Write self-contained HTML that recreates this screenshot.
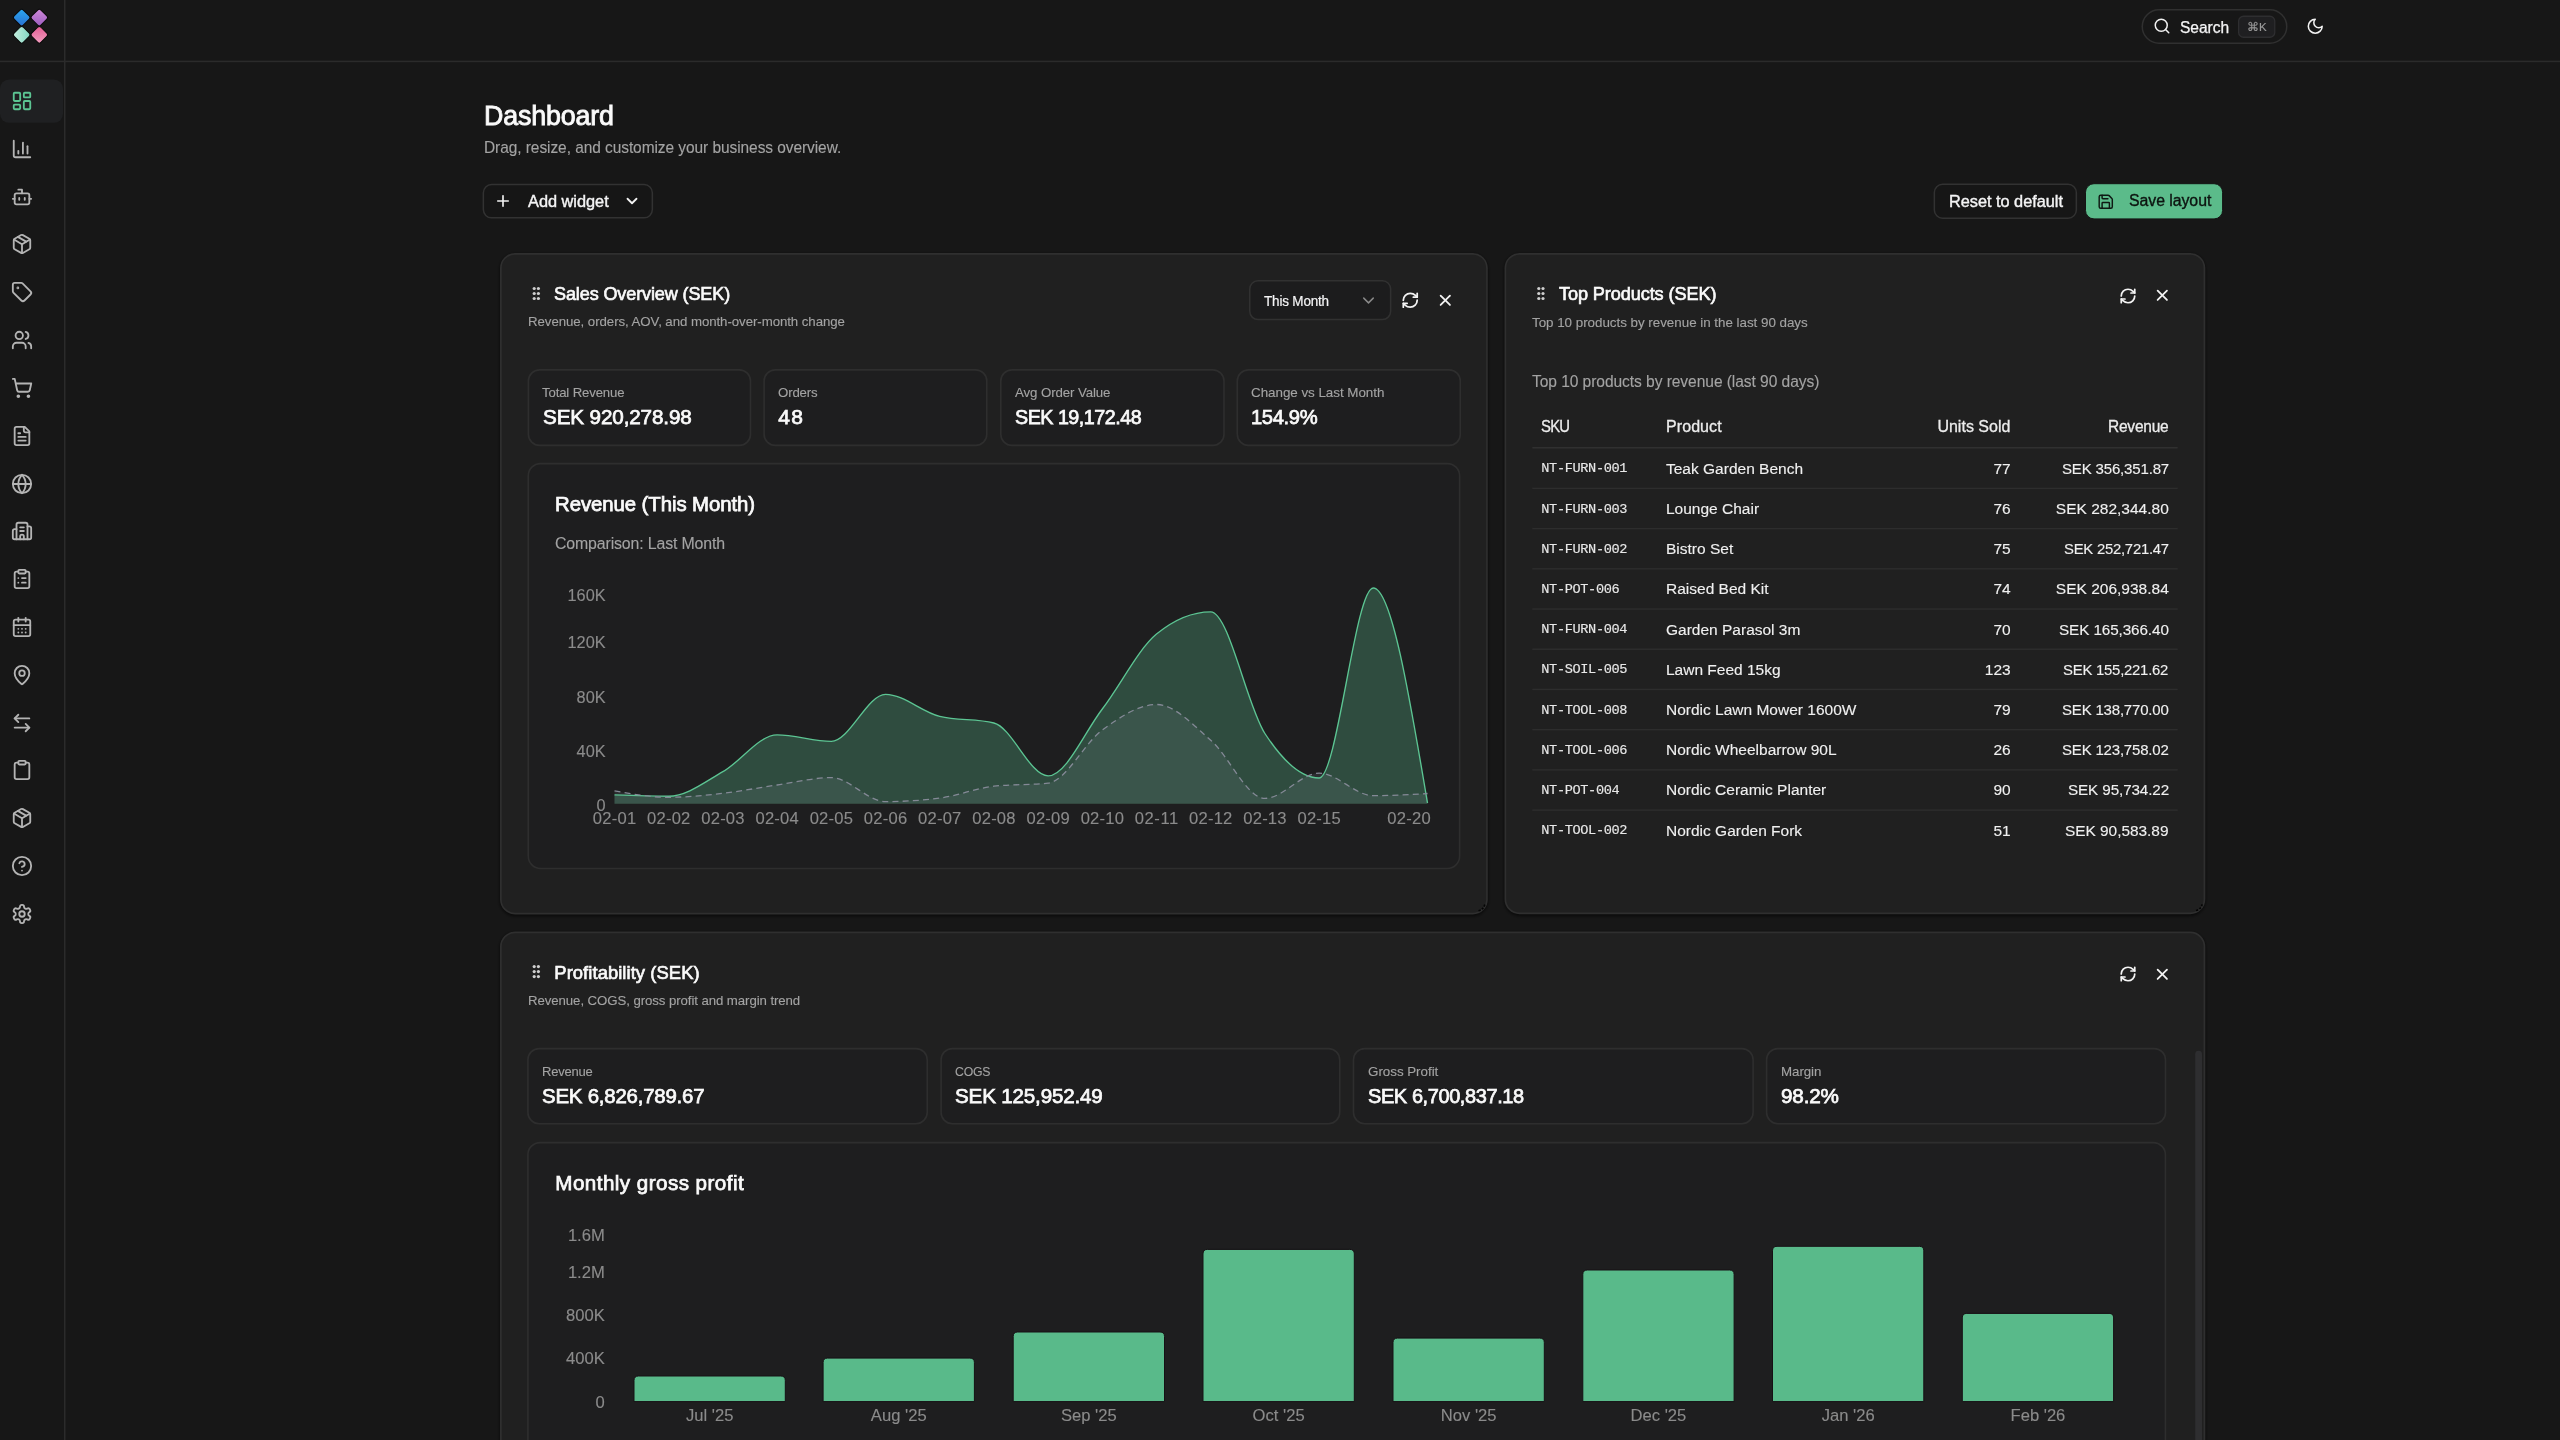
<!DOCTYPE html>
<html><head><meta charset="utf-8"><title>Dashboard</title>
<style>
html,body{margin:0;padding:0;}
body{width:2560px;height:1440px;overflow:hidden;position:relative;background:#171717;font-family:"Liberation Sans", sans-serif;}
.t{position:absolute;white-space:nowrap;}
.bx{position:absolute;box-sizing:border-box;}
.ic{position:absolute;overflow:visible;}
.layer{position:absolute;left:0;top:0;width:2560px;height:1440px;will-change:transform;}
</style></head><body>
<svg class="ic" style="left:0;top:0;width:2560px;height:1440px" viewBox="0 0 2560 1440"><defs><filter id="blur" x="-10%" y="-10%" width="120%" height="120%"><feGaussianBlur stdDeviation="1.5"/></filter></defs><rect x="0.00" y="60.70" width="2560.00" height="1.50" rx="0" fill="#2b2b2b"/>
<rect x="64.00" y="0.00" width="1.50" height="1440.00" rx="0" fill="#2b2b2b"/>
<rect x="0.00" y="79.50" width="63.00" height="43.30" rx="9" fill="#1f2022"/>
<rect x="2142.25" y="9.75" width="144.50" height="33.50" rx="16.75" fill="#171717" stroke="#303030" stroke-width="1.5"/>
<rect x="2238.65" y="16.25" width="36.10" height="21.00" rx="4.85" fill="#1f1f21" stroke="#2e2e30" stroke-width="1.3"/>
<rect x="483.35" y="184.55" width="169.00" height="33.30" rx="8.25" fill="#161616" stroke="#323232" stroke-width="1.5"/>
<rect x="1934.35" y="184.35" width="142.00" height="33.90" rx="8.25" fill="#161616" stroke="#323232" stroke-width="1.5"/>
<rect x="2085.50" y="183.70" width="137.10" height="35.20" rx="8.50" fill="#5bbb8a" stroke="#141414" stroke-width="1.0"/>
<rect x="499.50" y="253.50" width="988.80" height="662.90" rx="16" fill="#0a0a0a" fill-opacity="0.55" filter="url(#blur)"/><rect x="500.85" y="253.85" width="986.10" height="659.70" rx="14.15" fill="#202020" stroke="#2f2f2f" stroke-width="1.7"/>
<rect x="1504.00" y="253.50" width="701.80" height="662.70" rx="16" fill="#0a0a0a" fill-opacity="0.55" filter="url(#blur)"/><rect x="1505.35" y="253.85" width="699.10" height="659.50" rx="14.15" fill="#202020" stroke="#2f2f2f" stroke-width="1.7"/>
<rect x="499.50" y="932.10" width="1706.30" height="549.90" rx="16" fill="#0a0a0a" fill-opacity="0.55" filter="url(#blur)"/><rect x="500.85" y="932.45" width="1703.60" height="546.70" rx="14.15" fill="#202020" stroke="#2f2f2f" stroke-width="1.7"/>
<rect x="1249.75" y="280.75" width="140.90" height="38.80" rx="8.25" fill="#1c1c1d" stroke="#313131" stroke-width="1.5"/>
<rect x="528.40" y="369.90" width="222.10" height="75.50" rx="11.20" fill="#1e1e1f" stroke="#2e2e2e" stroke-width="1.6"/>
<rect x="764.10" y="369.90" width="222.70" height="75.50" rx="11.20" fill="#1e1e1f" stroke="#2e2e2e" stroke-width="1.6"/>
<rect x="1000.80" y="369.90" width="223.20" height="75.50" rx="11.20" fill="#1e1e1f" stroke="#2e2e2e" stroke-width="1.6"/>
<rect x="1237.30" y="369.90" width="223.00" height="75.50" rx="11.20" fill="#1e1e1f" stroke="#2e2e2e" stroke-width="1.6"/>
<rect x="528.30" y="463.60" width="931.30" height="404.90" rx="12.20" fill="#1e1e1f" stroke="#2e2e2e" stroke-width="1.6"/>
<rect x="1532.30" y="447.00" width="645.40" height="1.50" rx="0" fill="#303030"/>
<rect x="1532.30" y="487.65" width="645.40" height="1.40" rx="0" fill="#2d2d2d"/>
<rect x="1532.30" y="527.87" width="645.40" height="1.40" rx="0" fill="#2d2d2d"/>
<rect x="1532.30" y="568.09" width="645.40" height="1.40" rx="0" fill="#2d2d2d"/>
<rect x="1532.30" y="608.31" width="645.40" height="1.40" rx="0" fill="#2d2d2d"/>
<rect x="1532.30" y="648.53" width="645.40" height="1.40" rx="0" fill="#2d2d2d"/>
<rect x="1532.30" y="688.75" width="645.40" height="1.40" rx="0" fill="#2d2d2d"/>
<rect x="1532.30" y="728.97" width="645.40" height="1.40" rx="0" fill="#2d2d2d"/>
<rect x="1532.30" y="769.19" width="645.40" height="1.40" rx="0" fill="#2d2d2d"/>
<rect x="1532.30" y="809.41" width="645.40" height="1.40" rx="0" fill="#2d2d2d"/>
<rect x="527.90" y="1048.60" width="399.30" height="75.10" rx="11.20" fill="#1e1e1f" stroke="#2e2e2e" stroke-width="1.6"/>
<rect x="941.10" y="1048.60" width="398.60" height="75.10" rx="11.20" fill="#1e1e1f" stroke="#2e2e2e" stroke-width="1.6"/>
<rect x="1353.50" y="1048.60" width="399.60" height="75.10" rx="11.20" fill="#1e1e1f" stroke="#2e2e2e" stroke-width="1.6"/>
<rect x="1766.60" y="1048.60" width="398.90" height="75.10" rx="11.20" fill="#1e1e1f" stroke="#2e2e2e" stroke-width="1.6"/>
<rect x="527.90" y="1142.60" width="1637.50" height="336.60" rx="12.20" fill="#1e1e1f" stroke="#2e2e2e" stroke-width="1.6"/>
<rect x="2195.20" y="1050.80" width="6.80" height="409.20" rx="3.4" fill="#2e2e30"/>
</svg>
<svg class="ic" style="left:0;top:0;width:2560px;height:1440px" viewBox="0 0 2560 1440"><circle cx="534.20" cy="288.50" r="1.6" fill="#cfcfcf"/><circle cx="534.20" cy="293.50" r="1.6" fill="#cfcfcf"/><circle cx="534.20" cy="298.50" r="1.6" fill="#cfcfcf"/><circle cx="538.40" cy="288.50" r="1.6" fill="#cfcfcf"/><circle cx="538.40" cy="293.50" r="1.6" fill="#cfcfcf"/><circle cx="538.40" cy="298.50" r="1.6" fill="#cfcfcf"/><circle cx="1538.80" cy="288.50" r="1.6" fill="#cfcfcf"/><circle cx="1538.80" cy="293.50" r="1.6" fill="#cfcfcf"/><circle cx="1538.80" cy="298.50" r="1.6" fill="#cfcfcf"/><circle cx="1543.00" cy="288.50" r="1.6" fill="#cfcfcf"/><circle cx="1543.00" cy="293.50" r="1.6" fill="#cfcfcf"/><circle cx="1543.00" cy="298.50" r="1.6" fill="#cfcfcf"/><circle cx="534.20" cy="966.60" r="1.6" fill="#cfcfcf"/><circle cx="534.20" cy="971.60" r="1.6" fill="#cfcfcf"/><circle cx="534.20" cy="976.60" r="1.6" fill="#cfcfcf"/><circle cx="538.40" cy="966.60" r="1.6" fill="#cfcfcf"/><circle cx="538.40" cy="971.60" r="1.6" fill="#cfcfcf"/><circle cx="538.40" cy="976.60" r="1.6" fill="#cfcfcf"/><path d="M1478.5,910.8 Q1483.5,909.5 1484.8,904.5" fill="none" stroke="#050505" stroke-width="1.6" stroke-dasharray="2.2 1.4"/><path d="M2196,910.5 Q2201,909.2 2202.2,904.2" fill="none" stroke="#050505" stroke-width="1.6" stroke-dasharray="2.2 1.4"/><path d="M614.50,794.90C632.57,795.55 650.63,796.20 668.70,796.20C686.77,796.20 704.83,781.92 722.90,771.70C740.97,761.48 759.03,734.90 777.10,734.90C795.17,734.90 813.23,741.30 831.30,741.30C849.37,741.30 867.43,694.30 885.50,694.30C903.57,694.30 921.63,712.00 939.70,716.40C957.77,720.80 975.83,718.60 993.90,723.00C1011.97,727.40 1030.03,775.90 1048.10,775.90C1066.17,775.90 1084.23,732.63 1102.30,709.00C1120.37,685.37 1138.43,648.90 1156.50,634.10C1174.57,619.30 1192.63,611.90 1210.70,611.90C1228.77,611.90 1246.83,705.82 1264.90,733.50C1282.97,761.18 1301.03,778.00 1319.10,778.00C1337.17,778.00 1355.23,588.00 1373.30,588.00C1391.37,588.00 1409.43,695.50 1427.50,803.00 L1427.50,803.7 L614.50,803.7 Z" fill="#5bbb8a" fill-opacity="0.3"/><path d="M614.50,790.90C632.57,794.10 650.63,797.30 668.70,797.30C686.77,797.30 704.83,795.35 722.90,793.30C740.97,791.25 759.03,787.62 777.10,785.00C795.17,782.38 813.23,777.60 831.30,777.60C849.37,777.60 867.43,801.60 885.50,801.60C903.57,801.60 921.63,800.43 939.70,798.10C957.77,795.77 975.83,788.27 993.90,786.20C1011.97,784.13 1030.03,785.17 1048.10,783.10C1066.17,781.03 1084.23,743.10 1102.30,730.00C1120.37,716.90 1138.43,704.50 1156.50,704.50C1174.57,704.50 1192.63,724.55 1210.70,740.20C1228.77,755.85 1246.83,798.40 1264.90,798.40C1282.97,798.40 1301.03,773.10 1319.10,773.10C1337.17,773.10 1355.23,795.70 1373.30,795.70C1391.37,795.70 1409.43,794.60 1427.50,793.50 L1427.50,803.7 L614.50,803.7 Z" fill="#8a93a3" fill-opacity="0.13"/><path d="M614.50,794.90C632.57,795.55 650.63,796.20 668.70,796.20C686.77,796.20 704.83,781.92 722.90,771.70C740.97,761.48 759.03,734.90 777.10,734.90C795.17,734.90 813.23,741.30 831.30,741.30C849.37,741.30 867.43,694.30 885.50,694.30C903.57,694.30 921.63,712.00 939.70,716.40C957.77,720.80 975.83,718.60 993.90,723.00C1011.97,727.40 1030.03,775.90 1048.10,775.90C1066.17,775.90 1084.23,732.63 1102.30,709.00C1120.37,685.37 1138.43,648.90 1156.50,634.10C1174.57,619.30 1192.63,611.90 1210.70,611.90C1228.77,611.90 1246.83,705.82 1264.90,733.50C1282.97,761.18 1301.03,778.00 1319.10,778.00C1337.17,778.00 1355.23,588.00 1373.30,588.00C1391.37,588.00 1409.43,695.50 1427.50,803.00" fill="none" stroke="#5cc593" stroke-width="1.35"/><path d="M614.50,790.90C632.57,794.10 650.63,797.30 668.70,797.30C686.77,797.30 704.83,795.35 722.90,793.30C740.97,791.25 759.03,787.62 777.10,785.00C795.17,782.38 813.23,777.60 831.30,777.60C849.37,777.60 867.43,801.60 885.50,801.60C903.57,801.60 921.63,800.43 939.70,798.10C957.77,795.77 975.83,788.27 993.90,786.20C1011.97,784.13 1030.03,785.17 1048.10,783.10C1066.17,781.03 1084.23,743.10 1102.30,730.00C1120.37,716.90 1138.43,704.50 1156.50,704.50C1174.57,704.50 1192.63,724.55 1210.70,740.20C1228.77,755.85 1246.83,798.40 1264.90,798.40C1282.97,798.40 1301.03,773.10 1319.10,773.10C1337.17,773.10 1355.23,795.70 1373.30,795.70C1391.37,795.70 1409.43,794.60 1427.50,793.50" fill="none" stroke="#848996" stroke-width="1.3" stroke-dasharray="6 4.2"/><path d="M634.00,1401.6 V1380.50 Q634.00,1376.00 638.50,1376.00 H780.80 Q785.30,1376.00 785.30,1380.50 V1401.6 Z" fill="#59ba8a" stroke="#161014" stroke-width="1"/><path d="M823.10,1401.6 V1362.60 Q823.10,1358.10 827.60,1358.10 H969.90 Q974.40,1358.10 974.40,1362.60 V1401.6 Z" fill="#59ba8a" stroke="#161014" stroke-width="1"/><path d="M1013.20,1401.6 V1336.50 Q1013.20,1332.00 1017.70,1332.00 H1160.00 Q1164.50,1332.00 1164.50,1336.50 V1401.6 Z" fill="#59ba8a" stroke="#161014" stroke-width="1"/><path d="M1203.00,1401.6 V1253.90 Q1203.00,1249.40 1207.50,1249.40 H1349.80 Q1354.30,1249.40 1354.30,1253.90 V1401.6 Z" fill="#59ba8a" stroke="#161014" stroke-width="1"/><path d="M1393.00,1401.6 V1342.60 Q1393.00,1338.10 1397.50,1338.10 H1539.80 Q1544.30,1338.10 1544.30,1342.60 V1401.6 Z" fill="#59ba8a" stroke="#161014" stroke-width="1"/><path d="M1582.80,1401.6 V1274.50 Q1582.80,1270.00 1587.30,1270.00 H1729.60 Q1734.10,1270.00 1734.10,1274.50 V1401.6 Z" fill="#59ba8a" stroke="#161014" stroke-width="1"/><path d="M1772.50,1401.6 V1250.80 Q1772.50,1246.30 1777.00,1246.30 H1919.30 Q1923.80,1246.30 1923.80,1250.80 V1401.6 Z" fill="#59ba8a" stroke="#161014" stroke-width="1"/><path d="M1962.30,1401.6 V1317.90 Q1962.30,1313.40 1966.80,1313.40 H2109.10 Q2113.60,1313.40 2113.60,1317.90 V1401.6 Z" fill="#59ba8a" stroke="#161014" stroke-width="1"/></svg>
<div class="layer"><svg class="ic" style="left:0;top:0;width:64px;height:61px" viewBox="0 0 64 61">
<defs>
<linearGradient id="lg1" x1="0" y1="0" x2="1" y2="1"><stop offset="0" stop-color="#2aa8f0"/><stop offset="1" stop-color="#2a6fd0"/></linearGradient>
<linearGradient id="lg2" x1="0" y1="0" x2="1" y2="1"><stop offset="0" stop-color="#d08ad8"/><stop offset="1" stop-color="#9b5bbf"/></linearGradient>
<linearGradient id="lg3" x1="1" y1="0" x2="0" y2="1"><stop offset="0" stop-color="#7fd3c0"/><stop offset="1" stop-color="#c8f0e0"/></linearGradient>
<linearGradient id="lg4" x1="0" y1="0" x2="1" y2="1"><stop offset="0" stop-color="#e45a93"/><stop offset="1" stop-color="#f2a0c0"/></linearGradient>
</defs>
<rect x="-6.5" y="-6.5" width="13.0" height="13.0" rx="2.3" stroke="#0a0a0a" stroke-width="1.0" transform="translate(21.7 17.6) rotate(45)" fill="url(#lg1)"/>
<rect x="-6.5" y="-6.5" width="13.0" height="13.0" rx="2.3" stroke="#0a0a0a" stroke-width="1.0" transform="translate(39.3 17.6) rotate(45)" fill="url(#lg2)"/>
<rect x="-6.5" y="-6.5" width="13.0" height="13.0" rx="2.3" stroke="#0a0a0a" stroke-width="1.0" transform="translate(21.7 34.8) rotate(45)" fill="url(#lg3)"/>
<rect x="-6.5" y="-6.5" width="13.0" height="13.0" rx="2.3" stroke="#0a0a0a" stroke-width="1.0" transform="translate(39.3 34.8) rotate(45)" fill="url(#lg4)"/>
</svg>
<svg class="ic" style="left:11.00px;top:90.00px;width:22.00px;height:22.00px;" viewBox="0 0 24 24" fill="none" stroke="#5cc593" stroke-width="2.0" stroke-linecap="round" stroke-linejoin="round"><rect width="7" height="9" x="3" y="3" rx="1"/><rect width="7" height="5" x="14" y="3" rx="1"/><rect width="7" height="9" x="14" y="12" rx="1"/><rect width="7" height="5" x="3" y="16" rx="1"/></svg>
<svg class="ic" style="left:11.00px;top:137.82px;width:22.00px;height:22.00px;" viewBox="0 0 24 24" fill="none" stroke="#b4b4b4" stroke-width="2.0" stroke-linecap="round" stroke-linejoin="round"><path d="M3 3v16a2 2 0 0 0 2 2h16"/><path d="M18 17V9"/><path d="M13 17V5"/><path d="M8 17v-3"/></svg>
<svg class="ic" style="left:11.00px;top:185.64px;width:22.00px;height:22.00px;" viewBox="0 0 24 24" fill="none" stroke="#b4b4b4" stroke-width="2.0" stroke-linecap="round" stroke-linejoin="round"><path d="M12 8V4H8"/><rect width="16" height="12" x="4" y="8" rx="2"/><path d="M2 14h2"/><path d="M20 14h2"/><path d="M15 13v2"/><path d="M9 13v2"/></svg>
<svg class="ic" style="left:11.00px;top:233.46px;width:22.00px;height:22.00px;" viewBox="0 0 24 24" fill="none" stroke="#b4b4b4" stroke-width="2.0" stroke-linecap="round" stroke-linejoin="round"><path d="M11 21.73a2 2 0 0 0 2 0l7-4A2 2 0 0 0 21 16V8a2 2 0 0 0-1-1.73l-7-4a2 2 0 0 0-2 0l-7 4A2 2 0 0 0 3 8v8a2 2 0 0 0 1 1.730z"/><path d="M12 22V12"/><path d="m3.3 7 7.703 4.734a2 2 0 0 0 1.994 0L20.7 7"/><path d="m7.5 4.27 9 5.15"/></svg>
<svg class="ic" style="left:11.00px;top:281.28px;width:22.00px;height:22.00px;" viewBox="0 0 24 24" fill="none" stroke="#b4b4b4" stroke-width="2.0" stroke-linecap="round" stroke-linejoin="round"><path d="M12.586 2.586A2 2 0 0 0 11.172 2H4a2 2 0 0 0-2 2v7.172a2 2 0 0 0 .586 1.414l8.704 8.704a2.426 2.426 0 0 0 3.420 0l6.580-6.580a2.426 2.426 0 0 0 0-3.420z"/><circle cx="7.5" cy="7.5" r=".5" fill="currentColor"/></svg>
<svg class="ic" style="left:11.00px;top:329.10px;width:22.00px;height:22.00px;" viewBox="0 0 24 24" fill="none" stroke="#b4b4b4" stroke-width="2.0" stroke-linecap="round" stroke-linejoin="round"><path d="M16 21v-2a4 4 0 0 0-4-4H6a4 4 0 0 0-4 4v2"/><circle cx="9" cy="7" r="4"/><path d="M22 21v-2a4 4 0 0 0-3-3.87"/><path d="M16 3.13a4 4 0 0 1 0 7.75"/></svg>
<svg class="ic" style="left:11.00px;top:376.92px;width:22.00px;height:22.00px;" viewBox="0 0 24 24" fill="none" stroke="#b4b4b4" stroke-width="2.0" stroke-linecap="round" stroke-linejoin="round"><circle cx="8" cy="21" r="1"/><circle cx="19" cy="21" r="1"/><path d="M2.05 2.05h2l2.66 12.42a2 2 0 0 0 2 1.58h9.78a2 2 0 0 0 1.95-1.57l1.65-7.43H5.12"/></svg>
<svg class="ic" style="left:11.00px;top:424.74px;width:22.00px;height:22.00px;" viewBox="0 0 24 24" fill="none" stroke="#b4b4b4" stroke-width="2.0" stroke-linecap="round" stroke-linejoin="round"><path d="M15 2H6a2 2 0 0 0-2 2v16a2 2 0 0 0 2 2h12a2 2 0 0 0 2-2V7Z"/><path d="M14 2v4a2 2 0 0 0 2 2h4"/><path d="M10 9H8"/><path d="M16 13H8"/><path d="M16 17H8"/></svg>
<svg class="ic" style="left:11.00px;top:472.56px;width:22.00px;height:22.00px;" viewBox="0 0 24 24" fill="none" stroke="#b4b4b4" stroke-width="2.0" stroke-linecap="round" stroke-linejoin="round"><circle cx="12" cy="12" r="10"/><path d="M12 2a14.5 14.5 0 0 0 0 20 14.5 14.5 0 0 0 0-20"/><path d="M2 12h20"/></svg>
<svg class="ic" style="left:11.00px;top:520.38px;width:22.00px;height:22.00px;" viewBox="0 0 24 24" fill="none" stroke="#b4b4b4" stroke-width="2.0" stroke-linecap="round" stroke-linejoin="round"><path d="M10 12h4"/><path d="M10 8h4"/><path d="M14 21v-3a2 2 0 0 0-4 0v3"/><path d="M6 10H4a2 2 0 0 0-2 2v7a2 2 0 0 0 2 2h16a2 2 0 0 0 2-2V9a2 2 0 0 0-2-2h-2"/><path d="M6 21V5a2 2 0 0 1 2-2h8a2 2 0 0 1 2 2v16"/></svg>
<svg class="ic" style="left:11.00px;top:568.20px;width:22.00px;height:22.00px;" viewBox="0 0 24 24" fill="none" stroke="#b4b4b4" stroke-width="2.0" stroke-linecap="round" stroke-linejoin="round"><rect width="8" height="4" x="8" y="2" rx="1" ry="1"/><path d="M16 4h2a2 2 0 0 1 2 2v14a2 2 0 0 1-2 2H6a2 2 0 0 1-2-2V6a2 2 0 0 1 2-2h2"/><path d="M12 11h4"/><path d="M12 16h4"/><path d="M8 11h.01"/><path d="M8 16h.01"/></svg>
<svg class="ic" style="left:11.00px;top:616.02px;width:22.00px;height:22.00px;" viewBox="0 0 24 24" fill="none" stroke="#b4b4b4" stroke-width="2.0" stroke-linecap="round" stroke-linejoin="round"><path d="M8 2v4"/><path d="M16 2v4"/><rect width="18" height="18" x="3" y="4" rx="2"/><path d="M3 10h18"/><path d="M8 14h.01"/><path d="M12 14h.01"/><path d="M16 14h.01"/><path d="M8 18h.01"/><path d="M12 18h.01"/><path d="M16 18h.01"/></svg>
<svg class="ic" style="left:11.00px;top:663.84px;width:22.00px;height:22.00px;" viewBox="0 0 24 24" fill="none" stroke="#b4b4b4" stroke-width="2.0" stroke-linecap="round" stroke-linejoin="round"><path d="M20 10c0 4.993-5.539 10.193-7.399 11.799a1 1 0 0 1-1.202 0C9.539 20.193 4 14.993 4 10a8 8 0 0 1 16 0"/><circle cx="12" cy="10" r="3"/></svg>
<svg class="ic" style="left:11.00px;top:711.66px;width:22.00px;height:22.00px;" viewBox="0 0 24 24" fill="none" stroke="#b4b4b4" stroke-width="2.0" stroke-linecap="round" stroke-linejoin="round"><path d="M8 3 4 7l4 4"/><path d="M4 7h16"/><path d="m16 21 4-4-4-4"/><path d="M20 17H4"/></svg>
<svg class="ic" style="left:11.00px;top:759.48px;width:22.00px;height:22.00px;" viewBox="0 0 24 24" fill="none" stroke="#b4b4b4" stroke-width="2.0" stroke-linecap="round" stroke-linejoin="round"><rect width="8" height="4" x="8" y="2" rx="1" ry="1"/><path d="M16 4h2a2 2 0 0 1 2 2v14a2 2 0 0 1-2 2H6a2 2 0 0 1-2-2V6a2 2 0 0 1 2-2h2"/></svg>
<svg class="ic" style="left:11.00px;top:807.30px;width:22.00px;height:22.00px;" viewBox="0 0 24 24" fill="none" stroke="#b4b4b4" stroke-width="2.0" stroke-linecap="round" stroke-linejoin="round"><path d="M11 21.73a2 2 0 0 0 2 0l7-4A2 2 0 0 0 21 16V8a2 2 0 0 0-1-1.73l-7-4a2 2 0 0 0-2 0l-7 4A2 2 0 0 0 3 8v8a2 2 0 0 0 1 1.730z"/><path d="M12 22V12"/><path d="m3.3 7 7.703 4.734a2 2 0 0 0 1.994 0L20.7 7"/><path d="m7.5 4.27 9 5.15"/></svg>
<svg class="ic" style="left:11.00px;top:855.12px;width:22.00px;height:22.00px;" viewBox="0 0 24 24" fill="none" stroke="#b4b4b4" stroke-width="2.0" stroke-linecap="round" stroke-linejoin="round"><circle cx="12" cy="12" r="10"/><path d="M9.09 9a3 3 0 0 1 5.83 1c0 2-3 3-3 3"/><path d="M12 17h.01"/></svg>
<svg class="ic" style="left:11.00px;top:902.94px;width:22.00px;height:22.00px;" viewBox="0 0 24 24" fill="none" stroke="#b4b4b4" stroke-width="2.0" stroke-linecap="round" stroke-linejoin="round"><path d="M12.22 2h-.44a2 2 0 0 0-2 2v.18a2 2 0 0 1-1 1.73l-.43.25a2 2 0 0 1-2 0l-.15-.08a2 2 0 0 0-2.73.73l-.22.38a2 2 0 0 0 .73 2.73l.15.1a2 2 0 0 1 1 1.72v.51a2 2 0 0 1-1 1.74l-.15.09a2 2 0 0 0-.73 2.73l.22.38a2 2 0 0 0 2.73.73l.15-.08a2 2 0 0 1 2 0l.43.25a2 2 0 0 1 1 1.73V20a2 2 0 0 0 2 2h.44a2 2 0 0 0 2-2v-.18a2 2 0 0 1 1-1.73l.43-.25a2 2 0 0 1 2 0l.15.08a2 2 0 0 0 2.73-.73l.22-.39a2 2 0 0 0-.73-2.73l-.15-.08a2 2 0 0 1-1-1.74v-.5a2 2 0 0 1 1-1.74l.15-.09a2 2 0 0 0 .73-2.73l-.22-.38a2 2 0 0 0-2.73-.73l-.15.08a2 2 0 0 1-2 0l-.43-.25a2 2 0 0 1-1-1.73V4a2 2 0 0 0-2-2z"/><circle cx="12" cy="12" r="3"/></svg>
<svg class="ic" style="left:2153.00px;top:17.30px;width:18.00px;height:18.00px;" viewBox="0 0 24 24" fill="none" stroke="#f2f2f2" stroke-width="2" stroke-linecap="round" stroke-linejoin="round"><circle cx="11" cy="11" r="8"/><path d="m21 21-4.3-4.3"/></svg>
<div class="t" style="left:2179.80px;top:20.14px;font-size:15.60px;line-height:15.60px;color:#f4f4f5;font-family:'Liberation Sans', sans-serif;font-weight:400;letter-spacing:-0.018px;transform:scaleX(0.9973);transform-origin:0 0;-webkit-text-stroke:0.25px #f4f4f5;">Search</div>
<div class="t" style="left:2247.05px;top:21.83px;font-size:11.50px;line-height:11.50px;color:#9a9a9a;font-family:'Liberation Sans', sans-serif;font-weight:400;-webkit-text-stroke:0.12px #9a9a9a;">⌘K</div>
<svg class="ic" style="left:2306.30px;top:17.20px;width:18.50px;height:18.50px;" viewBox="0 0 24 24" fill="none" stroke="#f2f2f2" stroke-width="2" stroke-linecap="round" stroke-linejoin="round"><path d="M12 3a6 6 0 0 0 9 9 9 9 0 1 1-9-9Z"/></svg>
<div class="t" style="left:483.75px;top:101.98px;font-size:27.20px;line-height:27.20px;color:#fafafa;font-family:'Liberation Sans', sans-serif;font-weight:400;letter-spacing:-0.155px;transform:scaleX(0.9862);transform-origin:0 0;-webkit-text-stroke:0.85px #fafafa;">Dashboard</div>
<div class="t" style="left:483.75px;top:139.75px;font-size:15.70px;line-height:15.70px;color:#a3a3a3;font-family:'Liberation Sans', sans-serif;font-weight:400;letter-spacing:-0.066px;transform:scaleX(0.9867);transform-origin:0 0;-webkit-text-stroke:0.12px #a3a3a3;">Drag, resize, and customize your business overview.</div>
<svg class="ic" style="left:494.30px;top:191.80px;width:18.00px;height:18.00px;" viewBox="0 0 24 24" fill="none" stroke="#f2f2f2" stroke-width="2.2" stroke-linecap="round" stroke-linejoin="round"><path d="M5 12h14"/><path d="M12 5v14"/></svg>
<div class="t" style="left:528.00px;top:193.06px;font-size:16.40px;line-height:16.40px;color:#f4f4f5;font-family:'Liberation Sans', sans-serif;font-weight:400;letter-spacing:-0.018px;transform:scaleX(0.9971);transform-origin:0 0;-webkit-text-stroke:0.4px #f4f4f5;">Add widget</div>
<svg class="ic" style="left:623.40px;top:191.60px;width:18.00px;height:18.00px;" viewBox="0 0 24 24" fill="none" stroke="#f2f2f2" stroke-width="2.4" stroke-linecap="round" stroke-linejoin="round"><path d="m6 9 6 6 6-6"/></svg>
<div class="t" style="left:1948.50px;top:192.96px;font-size:16.40px;line-height:16.40px;color:#f4f4f5;font-family:'Liberation Sans', sans-serif;font-weight:400;letter-spacing:-0.023px;transform:scaleX(0.9955);transform-origin:0 0;-webkit-text-stroke:0.4px #f4f4f5;">Reset to default</div>
<svg class="ic" style="left:2096.50px;top:193.00px;width:17.50px;height:17.50px;" viewBox="0 0 24 24" fill="none" stroke="#0f1a14" stroke-width="2" stroke-linecap="round" stroke-linejoin="round"><path d="M15.2 3a2 2 0 0 1 1.4.6l3.8 3.8a2 2 0 0 1 .6 1.4V19a2 2 0 0 1-2 2H5a2 2 0 0 1-2-2V5a2 2 0 0 1 2-2z"/><path d="M17 21v-7a1 1 0 0 0-1-1H8a1 1 0 0 0-1 1v7"/><path d="M7 3v4a1 1 0 0 0 1 1h7"/></svg>
<div class="t" style="left:2129.20px;top:193.30px;font-size:16.00px;line-height:16.00px;color:#0d1410;font-family:'Liberation Sans', sans-serif;font-weight:400;letter-spacing:-0.053px;transform:scaleX(0.9906);transform-origin:0 0;-webkit-text-stroke:0.35px #0d1410;">Save layout</div>
<div class="t" style="left:554.25px;top:284.96px;font-size:18.40px;line-height:18.40px;color:#fafafa;font-family:'Liberation Sans', sans-serif;font-weight:400;letter-spacing:-0.123px;transform:scaleX(0.9812);transform-origin:0 0;-webkit-text-stroke:0.65px #fafafa;">Sales Overview (SEK)</div>
<div class="t" style="left:528.00px;top:315.43px;font-size:13.50px;line-height:13.50px;color:#a3a3a3;font-family:'Liberation Sans', sans-serif;font-weight:400;letter-spacing:-0.076px;transform:scaleX(0.9835);transform-origin:0 0;-webkit-text-stroke:0.12px #a3a3a3;">Revenue, orders, AOV, and month-over-month change</div>
<div class="t" style="left:1263.90px;top:293.80px;font-size:14.00px;line-height:14.00px;color:#f4f4f5;font-family:'Liberation Sans', sans-serif;font-weight:400;letter-spacing:-0.191px;transform:scaleX(0.9641);transform-origin:0 0;-webkit-text-stroke:0.2px #f4f4f5;">This Month</div>
<svg class="ic" style="left:1358.60px;top:291.40px;width:19.00px;height:19.00px;" viewBox="0 0 24 24" fill="none" stroke="#8a8a8a" stroke-width="1.8" stroke-linecap="round" stroke-linejoin="round"><path d="m6 9 6 6 6-6"/></svg>
<svg class="ic" style="left:1401.10px;top:290.90px;width:18.50px;height:18.50px;" viewBox="0 0 24 24" fill="none" stroke="#f4f4f4" stroke-width="2.3" stroke-linecap="round" stroke-linejoin="round"><path d="M3 12a9 9 0 0 1 9-9 9.75 9.75 0 0 1 6.74 2.74L21 8"/><path d="M21 3v5h-5"/><path d="M21 12a9 9 0 0 1-9 9 9.75 9.75 0 0 1-6.74-2.74L3 16"/><path d="M8 16H3v5"/></svg>
<svg class="ic" style="left:1435.90px;top:290.60px;width:18.60px;height:18.60px;" viewBox="0 0 24 24" fill="none" stroke="#f4f4f4" stroke-width="2.3" stroke-linecap="round" stroke-linejoin="round"><path d="M18 6 6 18"/><path d="m6 6 12 12"/></svg>
<div class="t" style="left:542.10px;top:386.04px;font-size:13.60px;line-height:13.60px;color:#a3a3a3;font-family:'Liberation Sans', sans-serif;font-weight:400;letter-spacing:-0.149px;transform:scaleX(0.9700);transform-origin:0 0;-webkit-text-stroke:0.12px #a3a3a3;">Total Revenue</div>
<div class="t" style="left:542.50px;top:406.05px;font-size:21.00px;line-height:21.00px;color:#fafafa;font-family:'Liberation Sans', sans-serif;font-weight:400;letter-spacing:-0.130px;transform:scaleX(0.9837);transform-origin:0 0;-webkit-text-stroke:0.75px #fafafa;">SEK 920,278.98</div>
<div class="t" style="left:777.80px;top:386.04px;font-size:13.60px;line-height:13.60px;color:#a3a3a3;font-family:'Liberation Sans', sans-serif;font-weight:400;letter-spacing:-0.153px;transform:scaleX(0.9731);transform-origin:0 0;-webkit-text-stroke:0.12px #a3a3a3;">Orders</div>
<div class="t" style="left:778.20px;top:406.05px;font-size:21.00px;line-height:21.00px;color:#fafafa;font-family:'Liberation Sans', sans-serif;font-weight:400;letter-spacing:1.348px;-webkit-text-stroke:0.75px #fafafa;">48</div>
<div class="t" style="left:1014.50px;top:386.04px;font-size:13.60px;line-height:13.60px;color:#a3a3a3;font-family:'Liberation Sans', sans-serif;font-weight:400;letter-spacing:-0.111px;transform:scaleX(0.9772);transform-origin:0 0;-webkit-text-stroke:0.12px #a3a3a3;">Avg Order Value</div>
<div class="t" style="left:1014.90px;top:406.05px;font-size:21.00px;line-height:21.00px;color:#fafafa;font-family:'Liberation Sans', sans-serif;font-weight:400;letter-spacing:-0.522px;transform:scaleX(0.9376);transform-origin:0 0;-webkit-text-stroke:0.75px #fafafa;">SEK 19,172.48</div>
<div class="t" style="left:1251.00px;top:386.04px;font-size:13.60px;line-height:13.60px;color:#a3a3a3;font-family:'Liberation Sans', sans-serif;font-weight:400;letter-spacing:-0.055px;transform:scaleX(0.9886);transform-origin:0 0;-webkit-text-stroke:0.12px #a3a3a3;">Change vs Last Month</div>
<div class="t" style="left:1251.40px;top:406.05px;font-size:21.00px;line-height:21.00px;color:#fafafa;font-family:'Liberation Sans', sans-serif;font-weight:400;letter-spacing:-0.386px;transform:scaleX(0.9610);transform-origin:0 0;-webkit-text-stroke:0.75px #fafafa;">154.9%</div>
<div class="t" style="left:555.30px;top:493.89px;font-size:20.60px;line-height:20.60px;color:#fafafa;font-family:'Liberation Sans', sans-serif;font-weight:400;letter-spacing:-0.077px;transform:scaleX(0.9894);transform-origin:0 0;-webkit-text-stroke:0.75px #fafafa;">Revenue (This Month)</div>
<div class="t" style="left:555.30px;top:535.25px;font-size:16.30px;line-height:16.30px;color:#a3a3a3;font-family:'Liberation Sans', sans-serif;font-weight:400;letter-spacing:-0.142px;transform:scaleX(0.9754);transform-origin:0 0;-webkit-text-stroke:0.12px #a3a3a3;">Comparison: Last Month</div>
<div class="t" style="left:567.54px;top:587.14px;font-size:16.30px;line-height:16.30px;color:#8b8b8b;font-family:'Liberation Sans', sans-serif;font-weight:400;-webkit-text-stroke:0.12px #8b8b8b;">160K</div>
<div class="t" style="left:567.54px;top:633.85px;font-size:16.30px;line-height:16.30px;color:#8b8b8b;font-family:'Liberation Sans', sans-serif;font-weight:400;-webkit-text-stroke:0.12px #8b8b8b;">120K</div>
<div class="t" style="left:576.60px;top:688.54px;font-size:16.30px;line-height:16.30px;color:#8b8b8b;font-family:'Liberation Sans', sans-serif;font-weight:400;-webkit-text-stroke:0.12px #8b8b8b;">80K</div>
<div class="t" style="left:576.60px;top:742.75px;font-size:16.30px;line-height:16.30px;color:#8b8b8b;font-family:'Liberation Sans', sans-serif;font-weight:400;-webkit-text-stroke:0.12px #8b8b8b;">40K</div>
<div class="t" style="left:596.54px;top:796.75px;font-size:16.30px;line-height:16.30px;color:#8b8b8b;font-family:'Liberation Sans', sans-serif;font-weight:400;-webkit-text-stroke:0.12px #8b8b8b;">0</div>
<div class="t" style="left:592.85px;top:811.49px;font-size:16.60px;line-height:16.60px;color:#8b8b8b;font-family:'Liberation Sans', sans-serif;font-weight:400;letter-spacing:0.209px;-webkit-text-stroke:0.12px #8b8b8b;">02-01</div>
<div class="t" style="left:647.05px;top:811.49px;font-size:16.60px;line-height:16.60px;color:#8b8b8b;font-family:'Liberation Sans', sans-serif;font-weight:400;letter-spacing:0.209px;-webkit-text-stroke:0.12px #8b8b8b;">02-02</div>
<div class="t" style="left:701.25px;top:811.49px;font-size:16.60px;line-height:16.60px;color:#8b8b8b;font-family:'Liberation Sans', sans-serif;font-weight:400;letter-spacing:0.209px;-webkit-text-stroke:0.12px #8b8b8b;">02-03</div>
<div class="t" style="left:755.45px;top:811.49px;font-size:16.60px;line-height:16.60px;color:#8b8b8b;font-family:'Liberation Sans', sans-serif;font-weight:400;letter-spacing:0.209px;-webkit-text-stroke:0.12px #8b8b8b;">02-04</div>
<div class="t" style="left:809.65px;top:811.49px;font-size:16.60px;line-height:16.60px;color:#8b8b8b;font-family:'Liberation Sans', sans-serif;font-weight:400;letter-spacing:0.209px;-webkit-text-stroke:0.12px #8b8b8b;">02-05</div>
<div class="t" style="left:863.85px;top:811.49px;font-size:16.60px;line-height:16.60px;color:#8b8b8b;font-family:'Liberation Sans', sans-serif;font-weight:400;letter-spacing:0.209px;-webkit-text-stroke:0.12px #8b8b8b;">02-06</div>
<div class="t" style="left:918.05px;top:811.49px;font-size:16.60px;line-height:16.60px;color:#8b8b8b;font-family:'Liberation Sans', sans-serif;font-weight:400;letter-spacing:0.209px;-webkit-text-stroke:0.12px #8b8b8b;">02-07</div>
<div class="t" style="left:972.25px;top:811.49px;font-size:16.60px;line-height:16.60px;color:#8b8b8b;font-family:'Liberation Sans', sans-serif;font-weight:400;letter-spacing:0.209px;-webkit-text-stroke:0.12px #8b8b8b;">02-08</div>
<div class="t" style="left:1026.45px;top:811.49px;font-size:16.60px;line-height:16.60px;color:#8b8b8b;font-family:'Liberation Sans', sans-serif;font-weight:400;letter-spacing:0.209px;-webkit-text-stroke:0.12px #8b8b8b;">02-09</div>
<div class="t" style="left:1080.65px;top:811.49px;font-size:16.60px;line-height:16.60px;color:#8b8b8b;font-family:'Liberation Sans', sans-serif;font-weight:400;letter-spacing:0.209px;-webkit-text-stroke:0.12px #8b8b8b;">02-10</div>
<div class="t" style="left:1134.85px;top:811.49px;font-size:16.60px;line-height:16.60px;color:#8b8b8b;font-family:'Liberation Sans', sans-serif;font-weight:400;letter-spacing:0.521px;-webkit-text-stroke:0.12px #8b8b8b;">02-11</div>
<div class="t" style="left:1189.05px;top:811.49px;font-size:16.60px;line-height:16.60px;color:#8b8b8b;font-family:'Liberation Sans', sans-serif;font-weight:400;letter-spacing:0.209px;-webkit-text-stroke:0.12px #8b8b8b;">02-12</div>
<div class="t" style="left:1243.25px;top:811.49px;font-size:16.60px;line-height:16.60px;color:#8b8b8b;font-family:'Liberation Sans', sans-serif;font-weight:400;letter-spacing:0.209px;-webkit-text-stroke:0.12px #8b8b8b;">02-13</div>
<div class="t" style="left:1297.45px;top:811.49px;font-size:16.60px;line-height:16.60px;color:#8b8b8b;font-family:'Liberation Sans', sans-serif;font-weight:400;letter-spacing:0.209px;-webkit-text-stroke:0.12px #8b8b8b;">02-15</div>
<div class="t" style="left:1387.35px;top:811.49px;font-size:16.60px;line-height:16.60px;color:#8b8b8b;font-family:'Liberation Sans', sans-serif;font-weight:400;letter-spacing:0.209px;-webkit-text-stroke:0.12px #8b8b8b;">02-20</div>
<div class="t" style="left:1558.50px;top:284.96px;font-size:18.40px;line-height:18.40px;color:#fafafa;font-family:'Liberation Sans', sans-serif;font-weight:400;letter-spacing:-0.097px;transform:scaleX(0.9849);transform-origin:0 0;-webkit-text-stroke:0.65px #fafafa;">Top Products (SEK)</div>
<div class="t" style="left:1532.30px;top:315.62px;font-size:13.50px;line-height:13.50px;color:#a3a3a3;font-family:'Liberation Sans', sans-serif;font-weight:400;letter-spacing:-0.031px;transform:scaleX(0.9925);transform-origin:0 0;-webkit-text-stroke:0.12px #a3a3a3;">Top 10 products by revenue in the last 90 days</div>
<svg class="ic" style="left:2118.90px;top:286.50px;width:18.00px;height:18.00px;" viewBox="0 0 24 24" fill="none" stroke="#f4f4f4" stroke-width="2.3" stroke-linecap="round" stroke-linejoin="round"><path d="M3 12a9 9 0 0 1 9-9 9.75 9.75 0 0 1 6.74 2.74L21 8"/><path d="M21 3v5h-5"/><path d="M21 12a9 9 0 0 1-9 9 9.75 9.75 0 0 1-6.74-2.74L3 16"/><path d="M8 16H3v5"/></svg>
<svg class="ic" style="left:2153.30px;top:286.30px;width:18.60px;height:18.60px;" viewBox="0 0 24 24" fill="none" stroke="#f4f4f4" stroke-width="2.3" stroke-linecap="round" stroke-linejoin="round"><path d="M18 6 6 18"/><path d="m6 6 12 12"/></svg>
<div class="t" style="left:1532.30px;top:373.57px;font-size:15.80px;line-height:15.80px;color:#a3a3a3;font-family:'Liberation Sans', sans-serif;font-weight:400;letter-spacing:-0.069px;transform:scaleX(0.9861);transform-origin:0 0;-webkit-text-stroke:0.12px #a3a3a3;">Top 10 products by revenue (last 90 days)</div>
<div class="t" style="left:1541.30px;top:419.20px;font-size:16.00px;line-height:16.00px;color:#ececec;font-family:'Liberation Sans', sans-serif;font-weight:400;letter-spacing:-0.839px;transform:scaleX(0.9289);transform-origin:0 0;-webkit-text-stroke:0.3px #ececec;">SKU</div>
<div class="t" style="left:1666.00px;top:419.20px;font-size:16.00px;line-height:16.00px;color:#ececec;font-family:'Liberation Sans', sans-serif;font-weight:400;letter-spacing:0.077px;-webkit-text-stroke:0.3px #ececec;">Product</div>
<div class="t" style="left:1937.40px;top:419.20px;font-size:16.00px;line-height:16.00px;color:#ececec;font-family:'Liberation Sans', sans-serif;font-weight:400;letter-spacing:0.008px;-webkit-text-stroke:0.3px #ececec;">Units Sold</div>
<div class="t" style="left:2108.00px;top:419.20px;font-size:16.00px;line-height:16.00px;color:#ececec;font-family:'Liberation Sans', sans-serif;font-weight:400;letter-spacing:-0.230px;transform:scaleX(0.9686);transform-origin:0 0;-webkit-text-stroke:0.3px #ececec;">Revenue</div>
<div class="t" style="left:1541.30px;top:462.36px;font-size:13.60px;line-height:13.60px;color:#e8e8e8;font-family:'Liberation Mono', monospace;font-weight:400;letter-spacing:-0.360px;-webkit-text-stroke:0.15px #e8e8e8;">NT-FURN-001</div>
<div class="t" style="left:1666.00px;top:460.73px;font-size:15.50px;line-height:15.50px;color:#f0f0f0;font-family:'Liberation Sans', sans-serif;font-weight:400;-webkit-text-stroke:0.12px #f0f0f0;">Teak Garden Bench</div>
<div class="t" style="left:1993.46px;top:460.73px;font-size:15.50px;line-height:15.50px;color:#f0f0f0;font-family:'Liberation Sans', sans-serif;font-weight:400;-webkit-text-stroke:0.12px #f0f0f0;">77</div>
<div class="t" style="left:2061.60px;top:460.73px;font-size:15.50px;line-height:15.50px;color:#f0f0f0;font-family:'Liberation Sans', sans-serif;font-weight:400;letter-spacing:-0.181px;transform:scaleX(0.9697);transform-origin:0 0;-webkit-text-stroke:0.12px #f0f0f0;">SEK 356,351.87</div>
<div class="t" style="left:1541.30px;top:502.58px;font-size:13.60px;line-height:13.60px;color:#e8e8e8;font-family:'Liberation Mono', monospace;font-weight:400;letter-spacing:-0.360px;-webkit-text-stroke:0.15px #e8e8e8;">NT-FURN-003</div>
<div class="t" style="left:1666.00px;top:500.94px;font-size:15.50px;line-height:15.50px;color:#f0f0f0;font-family:'Liberation Sans', sans-serif;font-weight:400;-webkit-text-stroke:0.12px #f0f0f0;">Lounge Chair</div>
<div class="t" style="left:1993.46px;top:500.94px;font-size:15.50px;line-height:15.50px;color:#f0f0f0;font-family:'Liberation Sans', sans-serif;font-weight:400;-webkit-text-stroke:0.12px #f0f0f0;">76</div>
<div class="t" style="left:2055.80px;top:500.94px;font-size:15.50px;line-height:15.50px;color:#f0f0f0;font-family:'Liberation Sans', sans-serif;font-weight:400;letter-spacing:0.008px;-webkit-text-stroke:0.12px #f0f0f0;">SEK 282,344.80</div>
<div class="t" style="left:1541.30px;top:542.80px;font-size:13.60px;line-height:13.60px;color:#e8e8e8;font-family:'Liberation Mono', monospace;font-weight:400;letter-spacing:-0.360px;-webkit-text-stroke:0.15px #e8e8e8;">NT-FURN-002</div>
<div class="t" style="left:1666.00px;top:541.17px;font-size:15.50px;line-height:15.50px;color:#f0f0f0;font-family:'Liberation Sans', sans-serif;font-weight:400;-webkit-text-stroke:0.12px #f0f0f0;">Bistro Set</div>
<div class="t" style="left:1993.46px;top:541.17px;font-size:15.50px;line-height:15.50px;color:#f0f0f0;font-family:'Liberation Sans', sans-serif;font-weight:400;-webkit-text-stroke:0.12px #f0f0f0;">75</div>
<div class="t" style="left:2063.70px;top:541.17px;font-size:15.50px;line-height:15.50px;color:#f0f0f0;font-family:'Liberation Sans', sans-serif;font-weight:400;letter-spacing:-0.250px;transform:scaleX(0.9585);transform-origin:0 0;-webkit-text-stroke:0.12px #f0f0f0;">SEK 252,721.47</div>
<div class="t" style="left:1541.30px;top:583.02px;font-size:13.60px;line-height:13.60px;color:#e8e8e8;font-family:'Liberation Mono', monospace;font-weight:400;letter-spacing:-0.360px;-webkit-text-stroke:0.15px #e8e8e8;">NT-POT-006</div>
<div class="t" style="left:1666.00px;top:581.39px;font-size:15.50px;line-height:15.50px;color:#f0f0f0;font-family:'Liberation Sans', sans-serif;font-weight:400;-webkit-text-stroke:0.12px #f0f0f0;">Raised Bed Kit</div>
<div class="t" style="left:1993.46px;top:581.39px;font-size:15.50px;line-height:15.50px;color:#f0f0f0;font-family:'Liberation Sans', sans-serif;font-weight:400;-webkit-text-stroke:0.12px #f0f0f0;">74</div>
<div class="t" style="left:2055.80px;top:581.39px;font-size:15.50px;line-height:15.50px;color:#f0f0f0;font-family:'Liberation Sans', sans-serif;font-weight:400;letter-spacing:0.008px;-webkit-text-stroke:0.12px #f0f0f0;">SEK 206,938.84</div>
<div class="t" style="left:1541.30px;top:623.24px;font-size:13.60px;line-height:13.60px;color:#e8e8e8;font-family:'Liberation Mono', monospace;font-weight:400;letter-spacing:-0.360px;-webkit-text-stroke:0.15px #e8e8e8;">NT-FURN-004</div>
<div class="t" style="left:1666.00px;top:621.61px;font-size:15.50px;line-height:15.50px;color:#f0f0f0;font-family:'Liberation Sans', sans-serif;font-weight:400;-webkit-text-stroke:0.12px #f0f0f0;">Garden Parasol 3m</div>
<div class="t" style="left:1993.46px;top:621.61px;font-size:15.50px;line-height:15.50px;color:#f0f0f0;font-family:'Liberation Sans', sans-serif;font-weight:400;-webkit-text-stroke:0.12px #f0f0f0;">70</div>
<div class="t" style="left:2058.90px;top:621.61px;font-size:15.50px;line-height:15.50px;color:#f0f0f0;font-family:'Liberation Sans', sans-serif;font-weight:400;letter-spacing:-0.094px;transform:scaleX(0.9840);transform-origin:0 0;-webkit-text-stroke:0.12px #f0f0f0;">SEK 165,366.40</div>
<div class="t" style="left:1541.30px;top:663.46px;font-size:13.60px;line-height:13.60px;color:#e8e8e8;font-family:'Liberation Mono', monospace;font-weight:400;letter-spacing:-0.360px;-webkit-text-stroke:0.15px #e8e8e8;">NT-SOIL-005</div>
<div class="t" style="left:1666.00px;top:661.83px;font-size:15.50px;line-height:15.50px;color:#f0f0f0;font-family:'Liberation Sans', sans-serif;font-weight:400;-webkit-text-stroke:0.12px #f0f0f0;">Lawn Feed 15kg</div>
<div class="t" style="left:1984.85px;top:661.83px;font-size:15.50px;line-height:15.50px;color:#f0f0f0;font-family:'Liberation Sans', sans-serif;font-weight:400;-webkit-text-stroke:0.12px #f0f0f0;">123</div>
<div class="t" style="left:2063.40px;top:661.83px;font-size:15.50px;line-height:15.50px;color:#f0f0f0;font-family:'Liberation Sans', sans-serif;font-weight:400;letter-spacing:-0.240px;transform:scaleX(0.9601);transform-origin:0 0;-webkit-text-stroke:0.12px #f0f0f0;">SEK 155,221.62</div>
<div class="t" style="left:1541.30px;top:703.68px;font-size:13.60px;line-height:13.60px;color:#e8e8e8;font-family:'Liberation Mono', monospace;font-weight:400;letter-spacing:-0.360px;-webkit-text-stroke:0.15px #e8e8e8;">NT-TOOL-008</div>
<div class="t" style="left:1666.00px;top:702.05px;font-size:15.50px;line-height:15.50px;color:#f0f0f0;font-family:'Liberation Sans', sans-serif;font-weight:400;-webkit-text-stroke:0.12px #f0f0f0;">Nordic Lawn Mower 1600W</div>
<div class="t" style="left:1993.46px;top:702.05px;font-size:15.50px;line-height:15.50px;color:#f0f0f0;font-family:'Liberation Sans', sans-serif;font-weight:400;-webkit-text-stroke:0.12px #f0f0f0;">79</div>
<div class="t" style="left:2062.00px;top:702.05px;font-size:15.50px;line-height:15.50px;color:#f0f0f0;font-family:'Liberation Sans', sans-serif;font-weight:400;letter-spacing:-0.194px;transform:scaleX(0.9676);transform-origin:0 0;-webkit-text-stroke:0.12px #f0f0f0;">SEK 138,770.00</div>
<div class="t" style="left:1541.30px;top:743.90px;font-size:13.60px;line-height:13.60px;color:#e8e8e8;font-family:'Liberation Mono', monospace;font-weight:400;letter-spacing:-0.360px;-webkit-text-stroke:0.15px #e8e8e8;">NT-TOOL-006</div>
<div class="t" style="left:1666.00px;top:742.26px;font-size:15.50px;line-height:15.50px;color:#f0f0f0;font-family:'Liberation Sans', sans-serif;font-weight:400;-webkit-text-stroke:0.12px #f0f0f0;">Nordic Wheelbarrow 90L</div>
<div class="t" style="left:1993.46px;top:742.26px;font-size:15.50px;line-height:15.50px;color:#f0f0f0;font-family:'Liberation Sans', sans-serif;font-weight:400;-webkit-text-stroke:0.12px #f0f0f0;">26</div>
<div class="t" style="left:2062.00px;top:742.26px;font-size:15.50px;line-height:15.50px;color:#f0f0f0;font-family:'Liberation Sans', sans-serif;font-weight:400;letter-spacing:-0.194px;transform:scaleX(0.9676);transform-origin:0 0;-webkit-text-stroke:0.12px #f0f0f0;">SEK 123,758.02</div>
<div class="t" style="left:1541.30px;top:784.12px;font-size:13.60px;line-height:13.60px;color:#e8e8e8;font-family:'Liberation Mono', monospace;font-weight:400;letter-spacing:-0.360px;-webkit-text-stroke:0.15px #e8e8e8;">NT-POT-004</div>
<div class="t" style="left:1666.00px;top:782.49px;font-size:15.50px;line-height:15.50px;color:#f0f0f0;font-family:'Liberation Sans', sans-serif;font-weight:400;-webkit-text-stroke:0.12px #f0f0f0;">Nordic Ceramic Planter</div>
<div class="t" style="left:1993.46px;top:782.49px;font-size:15.50px;line-height:15.50px;color:#f0f0f0;font-family:'Liberation Sans', sans-serif;font-weight:400;-webkit-text-stroke:0.12px #f0f0f0;">90</div>
<div class="t" style="left:2067.60px;top:782.49px;font-size:15.50px;line-height:15.50px;color:#f0f0f0;font-family:'Liberation Sans', sans-serif;font-weight:400;letter-spacing:-0.105px;transform:scaleX(0.9823);transform-origin:0 0;-webkit-text-stroke:0.12px #f0f0f0;">SEK 95,734.22</div>
<div class="t" style="left:1541.30px;top:824.34px;font-size:13.60px;line-height:13.60px;color:#e8e8e8;font-family:'Liberation Mono', monospace;font-weight:400;letter-spacing:-0.360px;-webkit-text-stroke:0.15px #e8e8e8;">NT-TOOL-002</div>
<div class="t" style="left:1666.00px;top:822.71px;font-size:15.50px;line-height:15.50px;color:#f0f0f0;font-family:'Liberation Sans', sans-serif;font-weight:400;-webkit-text-stroke:0.12px #f0f0f0;">Nordic Garden Fork</div>
<div class="t" style="left:1993.46px;top:822.71px;font-size:15.50px;line-height:15.50px;color:#f0f0f0;font-family:'Liberation Sans', sans-serif;font-weight:400;-webkit-text-stroke:0.12px #f0f0f0;">51</div>
<div class="t" style="left:2065.30px;top:822.71px;font-size:15.50px;line-height:15.50px;color:#f0f0f0;font-family:'Liberation Sans', sans-serif;font-weight:400;letter-spacing:-0.026px;transform:scaleX(0.9955);transform-origin:0 0;-webkit-text-stroke:0.12px #f0f0f0;">SEK 90,583.89</div>
<div class="t" style="left:554.30px;top:964.06px;font-size:18.40px;line-height:18.40px;color:#fafafa;font-family:'Liberation Sans', sans-serif;font-weight:400;letter-spacing:0.068px;-webkit-text-stroke:0.65px #fafafa;">Profitability (SEK)</div>
<div class="t" style="left:527.80px;top:994.42px;font-size:13.50px;line-height:13.50px;color:#a3a3a3;font-family:'Liberation Sans', sans-serif;font-weight:400;letter-spacing:-0.087px;transform:scaleX(0.9804);transform-origin:0 0;-webkit-text-stroke:0.12px #a3a3a3;">Revenue, COGS, gross profit and margin trend</div>
<svg class="ic" style="left:2119.00px;top:965.00px;width:18.00px;height:18.00px;" viewBox="0 0 24 24" fill="none" stroke="#f4f4f4" stroke-width="2.3" stroke-linecap="round" stroke-linejoin="round"><path d="M3 12a9 9 0 0 1 9-9 9.75 9.75 0 0 1 6.74 2.74L21 8"/><path d="M21 3v5h-5"/><path d="M21 12a9 9 0 0 1-9 9 9.75 9.75 0 0 1-6.74-2.74L3 16"/><path d="M8 16H3v5"/></svg>
<svg class="ic" style="left:2153.30px;top:965.20px;width:18.60px;height:18.60px;" viewBox="0 0 24 24" fill="none" stroke="#f4f4f4" stroke-width="2.3" stroke-linecap="round" stroke-linejoin="round"><path d="M18 6 6 18"/><path d="m6 6 12 12"/></svg>
<div class="t" style="left:542.00px;top:1064.83px;font-size:13.50px;line-height:13.50px;color:#a3a3a3;font-family:'Liberation Sans', sans-serif;font-weight:400;letter-spacing:-0.224px;transform:scaleX(0.9640);transform-origin:0 0;-webkit-text-stroke:0.12px #a3a3a3;">Revenue</div>
<div class="t" style="left:542.00px;top:1084.95px;font-size:21.00px;line-height:21.00px;color:#fafafa;font-family:'Liberation Sans', sans-serif;font-weight:400;letter-spacing:-0.219px;transform:scaleX(0.9719);transform-origin:0 0;-webkit-text-stroke:0.75px #fafafa;">SEK 6,826,789.67</div>
<div class="t" style="left:955.20px;top:1065.59px;font-size:12.60px;line-height:12.60px;color:#a3a3a3;font-family:'Liberation Sans', sans-serif;font-weight:400;letter-spacing:-0.220px;transform:scaleX(0.9740);transform-origin:0 0;-webkit-text-stroke:0.12px #a3a3a3;">COGS</div>
<div class="t" style="left:955.20px;top:1084.95px;font-size:21.00px;line-height:21.00px;color:#fafafa;font-family:'Liberation Sans', sans-serif;font-weight:400;letter-spacing:-0.162px;transform:scaleX(0.9797);transform-origin:0 0;-webkit-text-stroke:0.75px #fafafa;">SEK 125,952.49</div>
<div class="t" style="left:1367.60px;top:1064.83px;font-size:13.50px;line-height:13.50px;color:#a3a3a3;font-family:'Liberation Sans', sans-serif;font-weight:400;letter-spacing:-0.035px;transform:scaleX(0.9919);transform-origin:0 0;-webkit-text-stroke:0.12px #a3a3a3;">Gross Profit</div>
<div class="t" style="left:1367.60px;top:1084.95px;font-size:21.00px;line-height:21.00px;color:#fafafa;font-family:'Liberation Sans', sans-serif;font-weight:400;letter-spacing:-0.404px;transform:scaleX(0.9494);transform-origin:0 0;-webkit-text-stroke:0.75px #fafafa;">SEK 6,700,837.18</div>
<div class="t" style="left:1780.70px;top:1064.83px;font-size:13.50px;line-height:13.50px;color:#a3a3a3;font-family:'Liberation Sans', sans-serif;font-weight:400;letter-spacing:-0.070px;transform:scaleX(0.9874);transform-origin:0 0;-webkit-text-stroke:0.12px #a3a3a3;">Margin</div>
<div class="t" style="left:1780.70px;top:1084.95px;font-size:21.00px;line-height:21.00px;color:#fafafa;font-family:'Liberation Sans', sans-serif;font-weight:400;letter-spacing:-0.156px;transform:scaleX(0.9845);transform-origin:0 0;-webkit-text-stroke:0.75px #fafafa;">98.2%</div>
<div class="t" style="left:555.30px;top:1172.99px;font-size:20.60px;line-height:20.60px;color:#fafafa;font-family:'Liberation Sans', sans-serif;font-weight:400;letter-spacing:0.455px;-webkit-text-stroke:0.75px #fafafa;">Monthly gross profit</div>
<div class="t" style="left:567.90px;top:1228.49px;font-size:16.60px;line-height:16.60px;color:#8b8b8b;font-family:'Liberation Sans', sans-serif;font-weight:400;-webkit-text-stroke:0.12px #8b8b8b;">1.6M</div>
<div class="t" style="left:567.90px;top:1264.59px;font-size:16.60px;line-height:16.60px;color:#8b8b8b;font-family:'Liberation Sans', sans-serif;font-weight:400;-webkit-text-stroke:0.12px #8b8b8b;">1.2M</div>
<div class="t" style="left:566.04px;top:1307.59px;font-size:16.60px;line-height:16.60px;color:#8b8b8b;font-family:'Liberation Sans', sans-serif;font-weight:400;-webkit-text-stroke:0.12px #8b8b8b;">800K</div>
<div class="t" style="left:566.04px;top:1351.19px;font-size:16.60px;line-height:16.60px;color:#8b8b8b;font-family:'Liberation Sans', sans-serif;font-weight:400;-webkit-text-stroke:0.12px #8b8b8b;">400K</div>
<div class="t" style="left:595.57px;top:1394.89px;font-size:16.60px;line-height:16.60px;color:#8b8b8b;font-family:'Liberation Sans', sans-serif;font-weight:400;-webkit-text-stroke:0.12px #8b8b8b;">0</div>
<div class="t" style="left:685.92px;top:1408.49px;font-size:16.60px;line-height:16.60px;color:#8b8b8b;font-family:'Liberation Sans', sans-serif;font-weight:400;-webkit-text-stroke:0.12px #8b8b8b;">Jul '25</div>
<div class="t" style="left:870.86px;top:1408.49px;font-size:16.60px;line-height:16.60px;color:#8b8b8b;font-family:'Liberation Sans', sans-serif;font-weight:400;-webkit-text-stroke:0.12px #8b8b8b;">Aug '25</div>
<div class="t" style="left:1060.96px;top:1408.49px;font-size:16.60px;line-height:16.60px;color:#8b8b8b;font-family:'Liberation Sans', sans-serif;font-weight:400;-webkit-text-stroke:0.12px #8b8b8b;">Sep '25</div>
<div class="t" style="left:1252.61px;top:1408.49px;font-size:16.60px;line-height:16.60px;color:#8b8b8b;font-family:'Liberation Sans', sans-serif;font-weight:400;-webkit-text-stroke:0.12px #8b8b8b;">Oct '25</div>
<div class="t" style="left:1440.77px;top:1408.49px;font-size:16.60px;line-height:16.60px;color:#8b8b8b;font-family:'Liberation Sans', sans-serif;font-weight:400;-webkit-text-stroke:0.12px #8b8b8b;">Nov '25</div>
<div class="t" style="left:1630.57px;top:1408.49px;font-size:16.60px;line-height:16.60px;color:#8b8b8b;font-family:'Liberation Sans', sans-serif;font-weight:400;-webkit-text-stroke:0.12px #8b8b8b;">Dec '25</div>
<div class="t" style="left:1821.65px;top:1408.49px;font-size:16.60px;line-height:16.60px;color:#8b8b8b;font-family:'Liberation Sans', sans-serif;font-weight:400;-webkit-text-stroke:0.12px #8b8b8b;">Jan '26</div>
<div class="t" style="left:2010.53px;top:1408.49px;font-size:16.60px;line-height:16.60px;color:#8b8b8b;font-family:'Liberation Sans', sans-serif;font-weight:400;-webkit-text-stroke:0.12px #8b8b8b;">Feb '26</div>
</div></body></html>
